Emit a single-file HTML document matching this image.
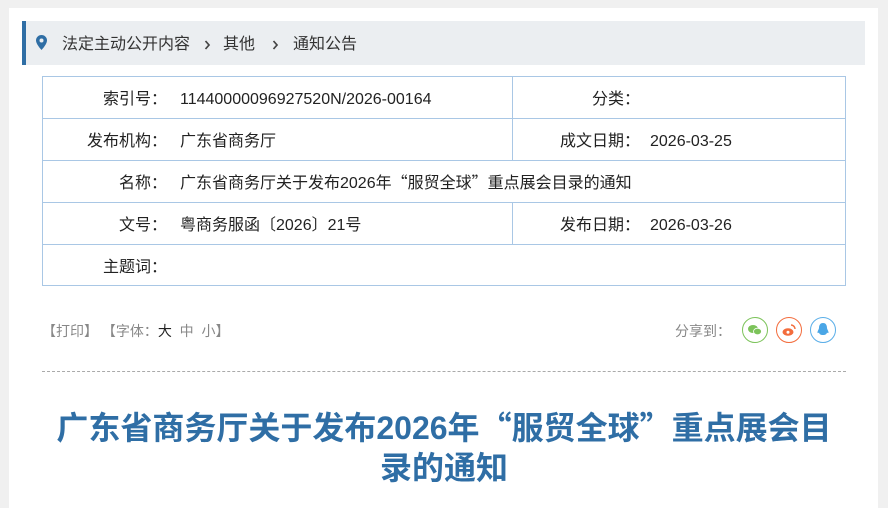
<!DOCTYPE html>
<html><head><meta charset="utf-8"><style>
body{margin:0;background:#f0f0f0;font-family:"Liberation Sans","Noto Sans CJK SC",sans-serif;width:888px;height:498px;overflow:hidden}
.cjk{font-family:"Noto Sans CJK SC",sans-serif;line-height:1}
.panel{position:absolute;left:9px;top:8px;width:869px;height:500px;background:#fff}
.bc{position:absolute;left:22px;top:21px;width:839px;height:44px;background:#ebeef1;border-left:4px solid #2f6ea5;font-size:16px;color:#333;line-height:44px}
.bc span{position:absolute;top:2px}
.tbl{position:absolute;left:42px;top:76px;width:802px;height:208px;border:1px solid #a9c7e5;font-size:16px;color:#222}
.row{position:absolute;left:0;width:802px;height:42px;line-height:42px;border-top:1px solid #a9c7e5}
.row>span{position:absolute;top:2px;white-space:nowrap}
.tb{position:absolute;top:321px;font-size:14px;color:#888}
.ic{position:absolute;top:317px;width:26px;height:26px;border-radius:50%;box-sizing:border-box;border:1.5px solid;display:flex;align-items:center;justify-content:center}
.dash{position:absolute;left:42px;top:371px;width:804px;border-top:1px dashed #aaa}
h1{position:absolute;left:42px;top:408px;width:804px;margin:0;text-align:center;font-size:32px;line-height:40px;color:#2f6ea5;font-weight:bold}
</style></head><body>
<div class="panel"></div>
<div class="bc">
<svg style="position:absolute;left:10px;top:14px" width="11" height="16" viewBox="0 0 11 16"><path d="M5.5 0C2.5 0 0 2.4 0 5.4 0 9.3 5.5 15 5.5 15S11 9.3 11 5.4C11 2.4 8.5 0 5.5 0z" fill="#2f6ea5"/><circle cx="5.5" cy="5.5" r="2" fill="#ebeef1"/></svg>
<span style="left:36px">法定主动公开内容</span>
<svg style="position:absolute;left:178px;top:19px" width="7" height="10" viewBox="0 0 7 10"><path d="M1.5 1l3.5 4-3.5 4" stroke="#444" stroke-width="1.7" fill="none"/></svg>
<span style="left:197px">其他</span>
<svg style="position:absolute;left:246px;top:19px" width="7" height="10" viewBox="0 0 7 10"><path d="M1.5 1l3.5 4-3.5 4" stroke="#444" stroke-width="1.7" fill="none"/></svg>
<span style="left:267px">通知公告</span>
</div>
<div class="tbl">
<div style="position:absolute;left:469px;top:0;height:83px;border-left:1px solid #a9c7e5"></div>
<div style="position:absolute;left:469px;top:125px;height:42px;border-left:1px solid #a9c7e5"></div>
<div class="row" style="top:0;border-top:0"><span style="right:678px">索引号：</span><span style="left:137px">11440000096927520N/2026-00164</span><span style="left:549px">分类：</span></div>
<div class="row" style="top:41px"><span style="right:678px">发布机构：</span><span style="left:137px">广东省商务厅</span><span style="left:517px">成文日期：</span><span style="left:607px">2026-03-25</span></div>
<div class="row" style="top:83px"><span style="right:678px">名称：</span><span style="left:137px">广东省商务厅关于发布2026年<span class="cjk">“</span>服贸全球<span class="cjk">”</span>重点展会目录的通知</span></div>
<div class="row" style="top:125px"><span style="right:678px">文号：</span><span style="left:137px">粤商务服函〔2026〕21号</span><span style="left:517px">发布日期：</span><span style="left:607px">2026-03-26</span></div>
<div class="row" style="top:167px"><span style="right:678px">主题词：</span></div>
</div>
<div class="tb" style="left:42px">【打印】 【字体：<span style="color:#222">大</span>&nbsp; 中&nbsp; 小】</div>
<div class="tb" style="left:675px">分享到：</div>
<div class="ic" style="left:742px;border-color:#7cc35a"><svg width="20" height="20" viewBox="0 0 20 20"><ellipse cx="8" cy="9" rx="5" ry="4" fill="#7cc35a"/><ellipse cx="12.5" cy="11.5" rx="4" ry="3.3" fill="#7cc35a" stroke="#fff" stroke-width=".8"/></svg></div>
<div class="ic" style="left:776px;border-color:#f36c3c"><svg width="20" height="20" viewBox="0 0 20 20"><ellipse cx="9" cy="12" rx="5.5" ry="3.8" fill="#f36c3c"/><circle cx="9" cy="12.3" r="1.5" fill="#fff"/><path d="M12 5a4 4 0 0 1 4 4" stroke="#f36c3c" stroke-width="1.5" fill="none"/></svg></div>
<div class="ic" style="left:810px;border-color:#5aaee8"><svg width="20" height="20" viewBox="0 0 20 20"><path d="M10 3c-3 0-4 2.5-4 5 0 1-1.5 3-1.5 4.5 0 1 1 .5 1.5 0 .3 1.5 1.5 2.5 4 2.5s3.7-1 4-2.5c.5.5 1.5 1 1.5 0 0-1.5-1.5-3.5-1.5-4.5 0-2.5-1-5-4-5z" fill="#4aa6e6"/></svg></div>
<div class="dash"></div>
<h1>广东省商务厅关于发布2026年<span class="cjk">“</span>服贸全球<span class="cjk">”</span>重点展会目<br>录的通知</h1>
</body></html>
